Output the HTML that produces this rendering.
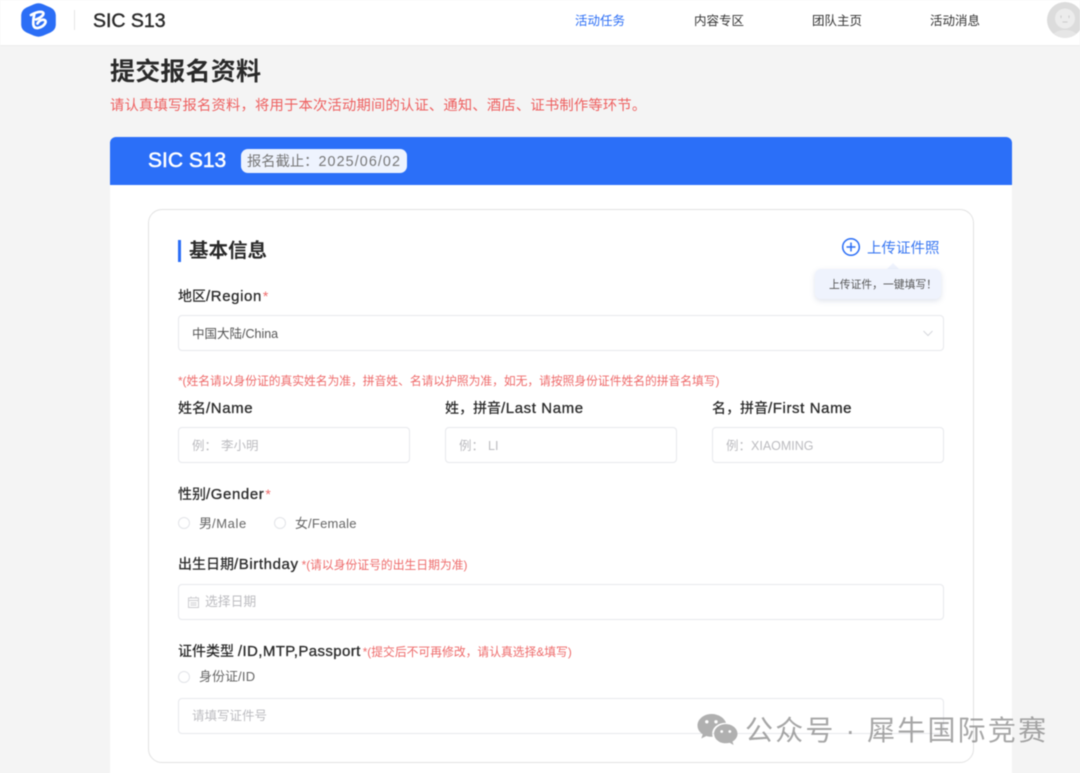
<!DOCTYPE html>
<html lang="zh-CN"><head><meta charset="utf-8"><title>SIC S13</title>
<style>
html,body{margin:0;padding:0;width:1080px;height:773px;overflow:hidden;background:#f4f4f4}
body{position:relative;font-family:"Liberation Sans","Noto Sans CJK SC",sans-serif;color:#222;filter:blur(.4px)}
.a{position:absolute;white-space:nowrap}
.t{position:absolute;white-space:nowrap;line-height:20px}
.box{position:absolute;background:#fff;border:1px solid #e7e8ec;border-radius:4px;box-sizing:border-box}
.l{font-size:14px;font-weight:500;color:#2a2a2a}
.l i{font-style:normal;font-size:15px;letter-spacing:.6px;-webkit-text-stroke:.3px #2a2a2a}
.ph{font-size:12.5px;color:#bcbcc0}
.r{font-size:11.8px;color:#ee6a6a;font-weight:400;letter-spacing:0}
.radio{position:absolute;width:12px;height:12px;border:1px solid #e2e4e8;border-radius:50%;box-sizing:border-box;background:#fff}
.nav{font-size:12.5px;color:#333}
.opt{font-size:13px;color:#666}
.opt i{font-style:normal;letter-spacing:.25px}
</style></head><body>
<div class="a" style="left:0;top:0;width:1080px;height:46px;background:#fff;border-bottom:1px solid #eee;box-sizing:border-box"></div>
<svg class="a" style="left:21px;top:3px" width="35" height="34" viewBox="0 0 35 34">
<path d="M13 1.200Q17.500 -.6 22 1.200L29.500 4.500Q34.500 7 34.800 12V22Q34.500 27 29.500 29.500L22 32.800Q17.500 34.600 13 32.800L5.500 29.500Q.5 27 .2 22V12Q.5 7 5.500 4.500Z" fill="#2b6ef6"/>
<path d="M10 12Q15 9 19.500 8.800Q23.500 9 22 12Q19.500 15 15 16.500M13.300 11.500Q12 17 12.300 21.500Q13 25.500 17 25Q23 23.500 24.500 19.500Q25 16.500 21.500 16.800Q18 17.500 16.500 20.500" fill="none" stroke="#fff" stroke-width="2.700" stroke-linecap="round" stroke-linejoin="round"/></svg>
<div class="a" style="left:74px;top:10px;width:1px;height:20px;background:#e6e6e6"></div>
<div class="t" style="left:93px;top:11px;font-size:19.500px;color:#2a2a2a;-webkit-text-stroke:.4px #2a2a2a">SIC S13</div>
<div class="t nav" style="left:575px;top:11px;color:#2b6ef6">活动任务</div>
<div class="t nav" style="left:694px;top:11px">内容专区</div>
<div class="t nav" style="left:812px;top:11px">团队主页</div>
<div class="t nav" style="left:930px;top:11px">活动消息</div>
<svg class="a" style="left:1047px;top:2px" width="33" height="36" viewBox="0 0 33 36">
<defs><clipPath id="av"><circle cx="18" cy="18" r="18"/></clipPath></defs>
<g clip-path="url(#av)"><rect width="36" height="36" fill="#dcdcdc"/><circle cx="18" cy="16.500" r="10" fill="#ececec"/>
<ellipse cx="18" cy="37" rx="14" ry="9" fill="#e6e6e6"/>
<path d="M14 13.500v2.500M22 13.500v2.500M15.500 20h5" stroke="#cacaca" stroke-width="1" fill="none"/></g></svg>

<div class="t" style="left:110px;top:58px;font-size:25px;line-height:28px;font-weight:700;color:#2a2a2a;letter-spacing:.2px">提交报名资料</div>
<div class="t" style="left:110px;top:96px;font-size:14.300px;letter-spacing:.2px;color:#ee6060">请认真填写报名资料，将用于本次活动期间的认证、通知、酒店、证书制作等环节。</div>

<div class="a" style="left:110px;top:137px;width:902px;height:640px;background:#fff;border-radius:6px 6px 0 0"></div>
<div class="a" style="left:110px;top:137px;width:902px;height:48px;background:#2b6ff8;border-radius:6px 6px 0 0"></div>
<div class="t" style="left:148px;top:151px;font-size:21px;color:#fff;-webkit-text-stroke:.5px #fff">SIC S13</div>
<div class="a" style="left:241px;top:149px;width:166px;height:24px;background:#eef3fe;border-radius:7px"></div>
<div class="t" style="left:247px;top:151.500px;font-size:14.300px;color:#777">报名截止：<span style="letter-spacing:1.100px">2025/06/02</span></div>

<div class="a" style="left:148px;top:209px;width:826px;height:554px;background:#fff;border:1px solid #e2e2e2;border-radius:14px;box-sizing:border-box"></div>
<div class="a" style="left:178px;top:240px;width:3px;height:22px;background:#2b6ef6"></div>
<div class="t" style="left:189px;top:240px;font-size:19.500px;line-height:22px;font-weight:700;color:#2a2a2a">基本信息</div>
<svg class="a" style="left:841px;top:237px" width="20" height="20" viewBox="0 0 20 20"><circle cx="10" cy="10" r="8.300" fill="none" stroke="#2b6ef6" stroke-width="1.500"/><path d="M5.500 10h9M10 5.500v9" stroke="#2b6ef6" stroke-width="1.500"/></svg>
<div class="t" style="left:867px;top:239px;font-size:14.500px;color:#3a78f2">上传证件照</div>
<svg class="a" style="left:885px;top:262px" width="16" height="9" viewBox="0 0 16 9"><path d="M0 9L8 1L16 9Z" fill="#eff3fd"/></svg>
<div class="a" style="left:815px;top:269px;width:126px;height:30px;background:#eff3fd;border-radius:6px;box-shadow:0 2px 6px rgba(80,100,150,.18)"></div>
<div class="t" style="left:829px;top:275px;font-size:10.800px;color:#555">上传证件，一键填写！</div>

<div class="t l" style="left:178px;top:286px">地区<i>/Region</i><span style="color:#ee6a6a;margin-left:1px">*</span></div>
<div class="box" style="left:178px;top:315px;width:766px;height:36px"></div>
<div class="t" style="left:192px;top:324px;font-size:12.500px;color:#555">中国大陆/China</div>
<svg class="a" style="left:922px;top:330px" width="12" height="7" viewBox="0 0 12 7"><path d="M1.500 1L6 5.500L10.500 1" fill="none" stroke="#d6d8dd" stroke-width="1"/></svg>

<div class="t r" style="left:178px;top:371px;letter-spacing:-.04px">*(姓名请以身份证的真实姓名为准，拼音姓、名请以护照为准，如无，请按照身份证件姓名的拼音名填写)</div>
<div class="t l" style="left:178px;top:398px">姓名<i>/Name</i></div>
<div class="t l" style="left:445px;top:398px">姓，拼音<i>/Last Name</i></div>
<div class="t l" style="left:712px;top:398px">名，拼音<i>/First Name</i></div>
<div class="box" style="left:178px;top:427px;width:232px;height:36px"></div>
<div class="box" style="left:445px;top:427px;width:232px;height:36px"></div>
<div class="box" style="left:712px;top:427px;width:232px;height:36px"></div>
<div class="t ph" style="left:192px;top:436px">例：<span style="margin-left:4px">李小明</span></div>
<div class="t ph" style="left:459px;top:436px">例：<span style="margin-left:4px">LI</span></div>
<div class="t ph" style="left:726px;top:436px">例：<span style="margin-left:0">XIAOMING</span></div>

<div class="t l" style="left:178px;top:484px">性别<i>/Gender</i><span style="color:#ee6a6a;margin-left:1px">*</span></div>
<div class="radio" style="left:178px;top:517px"></div>
<div class="t opt" style="left:199px;top:514px">男<i style="letter-spacing:.6px">/Male</i></div>
<div class="radio" style="left:274px;top:517px"></div>
<div class="t opt" style="left:295px;top:514px">女<i>/Female</i></div>

<div class="t l" style="left:178px;top:554px">出生日期<i>/Birthday</i><span class="r" style="margin-left:3px">*(请以身份证号的出生日期为准)</span></div>
<div class="box" style="left:178px;top:584px;width:766px;height:36px"></div>
<svg class="a" style="left:188px;top:596px" width="11" height="12" viewBox="0 0 11 12"><path d="M.5 2h10v9.500H.5ZM.5 4.500h10M3 .5v2M8 .5v2M2.500 7h6M2.500 9h6" fill="none" stroke="#cdcdd0" stroke-width="1"/></svg>
<div class="t ph" style="left:205px;top:592px;font-size:12.800px">选择日期</div>

<div class="t l" style="left:178px;top:641px">证件类型 <i style="letter-spacing:.4px">/ID,MTP,Passport</i><span class="r" style="margin-left:2px">*(提交后不可再修改，请认真选择&amp;填写)</span></div>
<div class="radio" style="left:178px;top:671px"></div>
<div class="t opt" style="left:199px;top:667px">身份证<i>/ID</i></div>
<div class="box" style="left:178px;top:698px;width:766px;height:36px"></div>
<div class="t ph" style="left:192px;top:706px">请填写证件号</div>

<svg class="a" style="left:697px;top:713px" width="41" height="34" viewBox="0 0 41 34">
<path d="M14.500 1C6.800 1 .5 6.200.5 12.500c0 3.600 2 6.700 5.200 8.800L4.300 25.500l5-2.500c1.700.5 3.400.8 5.200.8h1.200c-.3-1-.5-2-.5-3.100 0-6 5.700-10.800 12.800-10.800h1C27.500 5 21.500 1 14.500 1Z" fill="#b0b0b0"/>
<path d="M40.500 20.700c0-5.300-5.300-9.600-11.700-9.600s-11.700 4.300-11.700 9.600 5.300 9.600 11.700 9.600c1.300 0 2.600-.2 3.800-.5l4 2.200-1.100-3.500c3.100-1.800 5-4.600 5-7.800Z" fill="#b0b0b0"/>
<circle cx="9.800" cy="8.800" r="1.700" fill="#fff"/><circle cx="19" cy="8.800" r="1.700" fill="#fff"/><circle cx="24.700" cy="18.500" r="1.400" fill="#fff"/><circle cx="32.800" cy="18.500" r="1.400" fill="#fff"/></svg>
<div class="t" style="left:745px;top:715px;font-size:28px;line-height:32px;color:rgba(120,120,120,.66);letter-spacing:2.200px">公众号 · 犀牛国际竞赛</div>
</body></html>
